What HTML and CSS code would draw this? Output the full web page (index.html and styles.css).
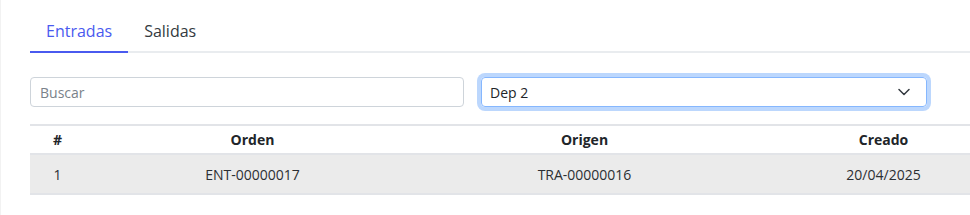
FILE: index.html
```html
<!DOCTYPE html>
<html lang="es">
<head>
<meta charset="utf-8">
<title>Movimientos</title>
<link rel="stylesheet" href="styles.css">
</head>
<body>
<div class="page">
  <nav class="tabs">
    <a class="tab active">Entradas</a>
    <a class="tab">Salidas</a>
  </nav>
  <div class="filters">
    <input class="search" type="text" placeholder="Buscar">
    <div class="select">
      <span>Dep 2</span>
      <svg class="chev" width="12" height="8" viewBox="0 0 12 8"><path d="M1 1.5 6 6.5 11 1.5" fill="none" stroke="#343a40" stroke-width="1.5" stroke-linecap="round" stroke-linejoin="round"/></svg>
    </div>
  </div>
  <table class="grid">
    <colgroup>
      <col class="c1"><col class="c2"><col class="c3"><col class="c4">
    </colgroup>
    <thead>
      <tr><th>#</th><th>Orden</th><th>Origen</th><th class="last">Creado</th></tr>
    </thead>
    <tbody>
      <tr><td>1</td><td>ENT-00000017</td><td>TRA-00000016</td><td class="last">20/04/2025</td></tr>
    </tbody>
  </table>
</div>
</body>
</html>
```
FILE: styles.css
```css
html, body {
  margin: 0;
  padding: 0;
  overflow: hidden;
  background: #fff;
}
body {
  font-family: "Open Sans", "Liberation Sans", sans-serif;
  color: #212529;
  border-left: 1px solid #f2f2f2;
  min-height: 215px;
  box-sizing: border-box;
}
.page {
  padding: 11px 0 0 29px;
}
.tabs {
  display: flex;
  border-bottom: 2px solid #e9ecef;
}
.tab {
  font-size: 16px;
  line-height: 24px;
  padding: 8px 16px;
  margin-bottom: -2px;
  border-bottom: 2px solid transparent;
  color: #343a40;
  cursor: pointer;
}
.tab.active {
  color: #4a5aef;
  border-bottom-color: #4a5aef;
}
.filters {
  display: flex;
  gap: 17px;
  margin-top: 24px;
  align-items: center;
}
.search {
  width: 434px;
  height: 30px;
  box-sizing: border-box;
  border: 1px solid #ced4da;
  border-radius: 4px;
  padding: 0 9px;
  font-family: inherit;
  font-size: 14px;
  color: #212529;
  outline: none;
}
.search::placeholder {
  color: #7a828a;
}
.select {
  width: 446px;
  height: 30px;
  box-sizing: border-box;
  border: 1px solid #86b7fe;
  border-radius: 4px;
  box-shadow: 0 0 0 4px #bcd7fd;
  padding: 0 16px 0 8px;
  display: flex;
  align-items: center;
  justify-content: space-between;
  font-size: 14px;
  color: #212529;
}
.chev {
  display: block;
}
.grid {
  margin-top: 17px;
  border-collapse: collapse;
  table-layout: fixed;
  width: 940px;
  font-size: 14px;
}
.c1 { width: 55px; }
.c2 { width: 335px; }
.c3 { width: 329px; }
.c4 { width: 221px; }
.grid thead tr {
  border-top: 2px solid #e2e4e8;
  border-bottom: 2px solid #e2e4e8;
}
.grid th {
  font-weight: 700;
  height: 27px;
  padding: 0;
  text-align: center;
  color: #212529;
}
.grid td {
  height: 38px;
  padding: 0;
  text-align: center;
  background: #ebebeb;
  color: #2b2f33;
}
.grid .last {
  padding-left: 48px;
}
.grid tbody tr {
  border-bottom: 2px solid #e2e4e8;
}
```
